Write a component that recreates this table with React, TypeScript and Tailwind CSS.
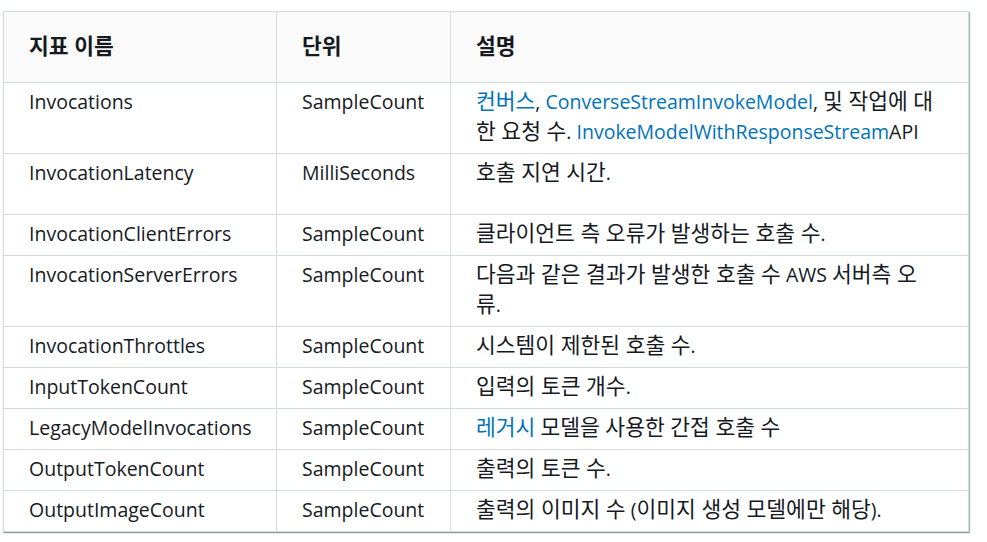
import React from 'react';

// Hangul runs are rendered a bit larger so they match the reference glyph widths
function ko(text: string): React.ReactNode[] {
  const parts = text.split(/([\uAC00-\uD7AF\u3130-\u318F]+(?:\s+[\uAC00-\uD7AF\u3130-\u318F]+)*)/);
  return parts.map((p, i) =>
    i % 2 === 1 ? (
      <span key={i} className="text-[21.5px] leading-[20px]">
        {p}
      </span>
    ) : (
      p
    )
  );
}

const link = 'text-[#0073bb]';

const rows: { name: string; unit: string; desc: React.ReactNode; h?: string }[] = [
  {
    name: 'Invocations',
    unit: 'SampleCount',
    desc: (
      <>
        <a className={link}>{ko('컨버스')}</a>, <a className={link}>ConverseStreamInvokeModel</a>, {ko('및 작업에 대')}
        <br />
        {ko('한 요청 수.')} <a className={link}>InvokeModelWithResponseStream</a>API
      </>
    ),
  },
  { name: 'InvocationLatency', unit: 'MilliSeconds', desc: ko('호출 지연 시간.'), h: 'h-[61px]' },
  { name: 'InvocationClientErrors', unit: 'SampleCount', desc: ko('클라이언트 측 오류가 발생하는 호출 수.') },
  {
    name: 'InvocationServerErrors',
    unit: 'SampleCount',
    desc: (
      <>
        {ko('다음과 같은 결과가 발생한 호출 수 AWS 서버측 오')}
        <br />
        {ko('류.')}
      </>
    ),
  },
  { name: 'InvocationThrottles', unit: 'SampleCount', desc: ko('시스템이 제한된 호출 수.') },
  { name: 'InputTokenCount', unit: 'SampleCount', desc: ko('입력의 토큰 개수.') },
  {
    name: 'LegacyModelInvocations',
    unit: 'SampleCount',
    desc: (
      <>
        <a className={link}>{ko('레거시')}</a> {ko('모델을 사용한 간접 호출 수')}
      </>
    ),
  },
  { name: 'OutputTokenCount', unit: 'SampleCount', desc: ko('출력의 토큰 수.') },
  { name: 'OutputImageCount', unit: 'SampleCount', desc: ko('출력의 이미지 수 (이미지 생성 모델에만 해당).') },
];

const cell = 'border border-[#d5dbdb] pl-[25px] pr-[20px] pt-[4px] pb-[6px] align-top whitespace-nowrap';
const head = 'border border-[#d5dbdb] pl-[25px] text-left align-middle font-bold';

export default function App() {
  return (
    <div className="min-h-screen bg-white pt-[11px] pl-[3px] font-['Open_Sans','Noto_Sans_CJK_KR',sans-serif] text-[19.5px] leading-[30px] text-[#16191f]">
      <table className="w-[966px] table-fixed border-collapse shadow-[1px_1px_1px_0_rgba(0,28,36,0.3),0_1px_1px_0_rgba(0,28,36,0.2)]">
        <colgroup>
          <col className="w-[273px]" />
          <col className="w-[174px]" />
          <col />
        </colgroup>
        <thead>
          <tr className="h-[71px] bg-[#fafafa]">
            <th className={head}>{ko('지표 이름')}</th>
            <th className={head}>{ko('단위')}</th>
            <th className={head}>{ko('설명')}</th>
          </tr>
        </thead>
        <tbody>
          {rows.map((r) => (
            <tr key={r.name} className={r.h}>
              <td className={cell}>{r.name}</td>
              <td className={cell}>{r.unit}</td>
              <td className={cell}>{r.desc}</td>
            </tr>
          ))}
        </tbody>
      </table>
    </div>
  );
}
